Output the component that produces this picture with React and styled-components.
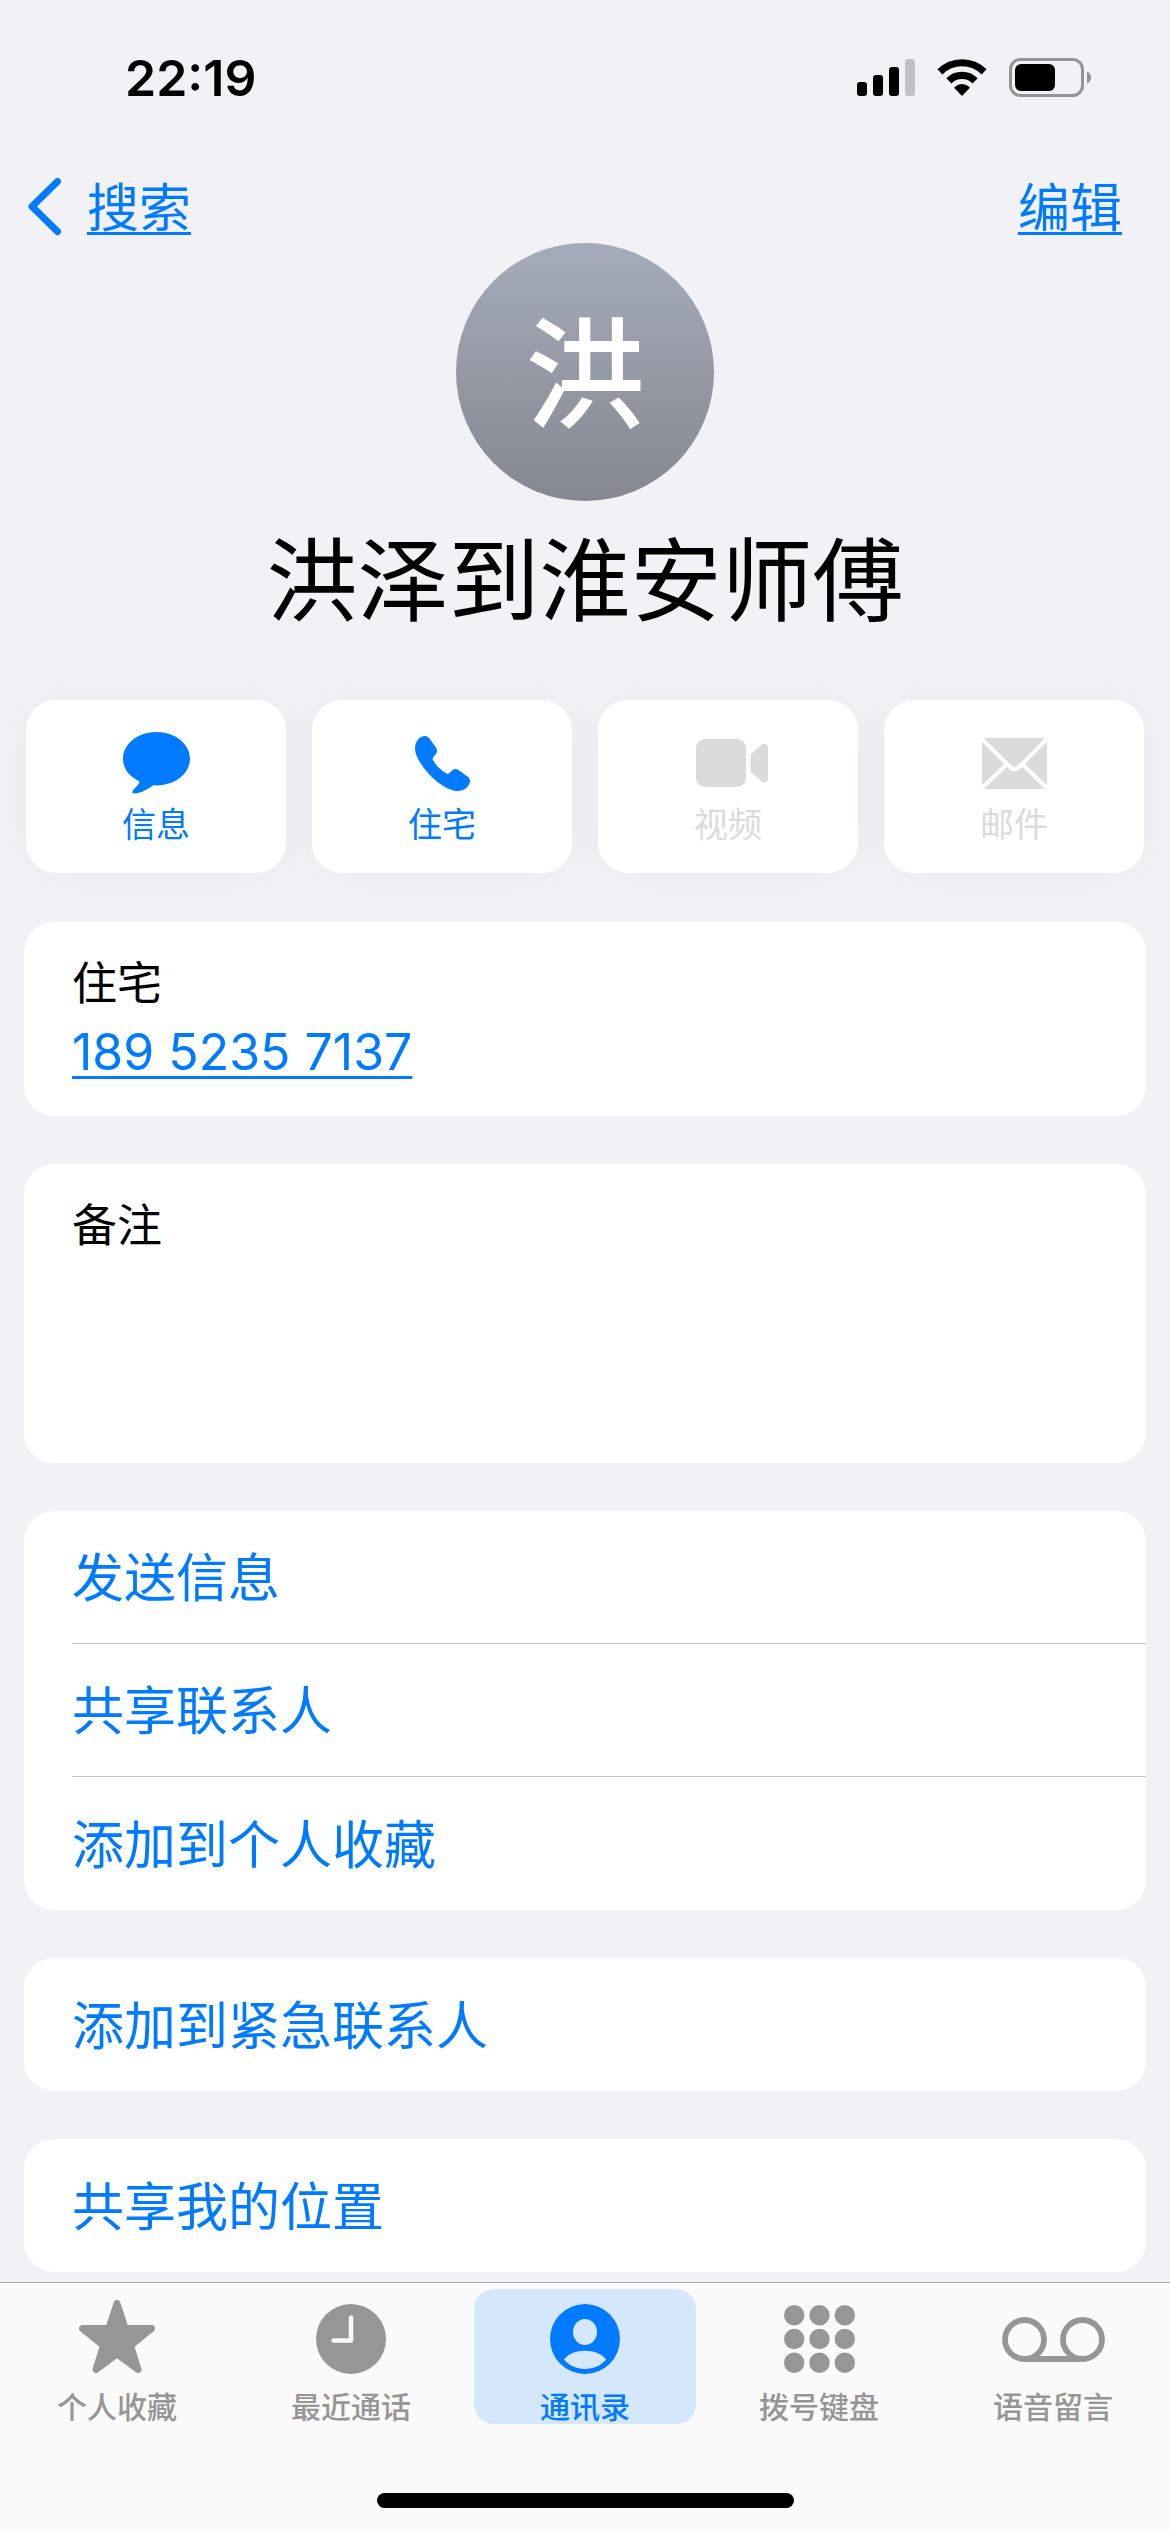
import React, { useState } from 'react';
import styled, { createGlobalStyle, ThemeProvider } from 'styled-components'

const theme = {
  colors: {
    page: '#f1f1f6',
    card: '#ffffff',
    bar: '#fafafa',
    blue: '#007aff',
    activeTab: '#d5e7fb',
    grey: '#979595',
    disabled: '#dbdbdb',
    line: '#c4c4c7',
    barLine: '#a9a9ad',
  },
  text: {
    xs: '30px',
    s: '34px',
    m: '45px',
    digits: '50px',
    l: '52px',
    xl: '91px',
  },
  radius: '30px',
}

const GlobalStyle = createGlobalStyle`
  * {
    box-sizing: border-box;
  }

  body {
    margin: 0;
    background-color: ${({ theme }) => theme.colors.page};
    font-family: Inter, "Noto Sans CJK SC", sans-serif;
    color: #000;
  }

  button, textarea {
    font: inherit;
    color: inherit;
    border: none;
    background: none;
    margin: 0;
    padding: 0;
  }

  button {
    cursor: pointer;
  }

  svg {
    display: block;
    flex-shrink: 0;
  }
`

const Screen = styled.div`
  display: flex;
  flex-direction: column;
  min-height: 100vh;
`

const StatusBar = styled.div`
  display: flex;
  align-items: center;
  justify-content: space-between;
  height: 141px;
  padding: 14px 78px 0 125px;
`

const Time = styled.time`
  font-size: ${({ theme }) => theme.text.digits};
  font-weight: 600;
  line-height: 60px;
`

const StatusIcons = styled.div`
  display: flex;
  align-items: center;
  gap: 22px;
`

const NavBar = styled.header`
  display: flex;
  align-items: center;
  justify-content: space-between;
  padding: 34px 48px 0 28px;
  font-size: ${({ theme }) => theme.text.l};
  line-height: 68px;
  color: ${({ theme }) => theme.colors.blue};
`

const BackLink = styled.a`
  display: flex;
  align-items: center;
  gap: 26px;
  color: inherit;
  text-decoration: none;
`

const Underlined = styled.span`
  text-decoration: underline;
  text-decoration-thickness: 3px;
  text-underline-offset: 5px;
  text-decoration-skip-ink: none;
`

const Profile = styled.section`
  display: flex;
  flex-direction: column;
  align-items: center;
  gap: 26px;
`

const Avatar = styled.div`
  display: flex;
  align-items: center;
  justify-content: center;
  width: 258px;
  height: 258px;
  padding-top: 8px;
  border-radius: 50%;
  background: linear-gradient(#a5abb9, #858891);
  color: #fff;
  font-size: 120px;
  font-weight: 500;
  line-height: 1;
`

const Name = styled.h1`
  margin: 0;
  font-size: ${({ theme }) => theme.text.xl};
  font-weight: 400;
  line-height: 108px;
`

const Actions = styled.div`
  display: grid;
  grid-template-columns: repeat(4, 1fr);
  gap: 26px;
  padding: 65px 26px 49px;
`

const ActionButton = styled.button`
  display: flex;
  flex-direction: column;
  align-items: center;
  gap: 10px;
  padding: 31px 0 28px;
  border-radius: ${({ theme }) => theme.radius};
  background-color: ${({ theme }) => theme.colors.card};
  box-shadow: 0 0 48px rgba(0, 0, 0, 0.04);
  font-size: ${({ theme }) => theme.text.s};
  line-height: 40px;
  color: ${({ theme }) => theme.colors.blue};

  &:disabled {
    color: ${({ theme }) => theme.colors.disabled};
    cursor: default;
  }
`

const ActionIcon = styled.span`
  display: flex;
  align-items: center;
  justify-content: center;
  height: 64px;
`

const Cards = styled.main`
  display: flex;
  flex: 1;
  flex-direction: column;
  gap: 48px;
  padding: 0 24px 10px;
`

const Card = styled.section`
  border-radius: ${({ theme }) => theme.radius};
  background-color: ${({ theme }) => theme.colors.card};
  overflow: hidden;
`

const FieldCard = styled(Card)`
  display: flex;
  flex-direction: column;
  align-items: flex-start;
  gap: 4px;
  padding: 32px 48px 30px;
`

const FieldLabel = styled.label`
  font-size: ${({ theme }) => theme.text.m};
  line-height: 60px;
`

const PhoneLink = styled.a`
  font-size: ${({ theme }) => theme.text.digits};
  line-height: 68px;
  color: ${({ theme }) => theme.colors.blue};
  text-decoration-thickness: 3px;
  text-underline-offset: 6px;
`

const NoteInput = styled.textarea`
  width: 100%;
  height: 173px;
  font-size: ${({ theme }) => theme.text.m};
  line-height: 60px;
  resize: none;
  outline: none;
`

const ListCard = styled(Card)`
  padding-left: 48px;
`

const ListButton = styled.button`
  display: block;
  width: 100%;
  height: 133px;
  padding-top: 4px;
  text-align: left;
  font-size: ${({ theme }) => theme.text.l};
  line-height: 72px;
  color: ${({ theme }) => theme.colors.blue};

  &:not(:last-child) {
    border-bottom: 1px solid ${({ theme }) => theme.colors.line};
  }
`

const BottomBar = styled.footer`
  position: sticky;
  bottom: 0;
  border-top: 1px solid ${({ theme }) => theme.colors.barLine};
  padding: 6px 0 24px;
  background-color: ${({ theme }) => theme.colors.bar};
`

const Tabs = styled.nav`
  display: grid;
  grid-template-columns: repeat(5, 1fr);
`

const Tab = styled.button`
  display: flex;
  flex-direction: column;
  align-items: center;
  gap: 14px;
  margin: 0 6px;
  padding-top: 13px;
  border-radius: 20px;
  font-size: ${({ theme }) => theme.text.xs};
  font-weight: 500;
  line-height: 34px;
  color: ${({ theme, $active }) => $active ? theme.colors.blue : theme.colors.grey};
  background-color: ${({ theme, $active }) => $active ? theme.colors.activeTab : 'transparent'};
`

const TabIcon = styled.span`
  display: flex;
  align-items: center;
  justify-content: center;
  height: 74px;
`

const HomeIndicator = styled.div`
  width: 417px;
  height: 15px;
  margin: 69px auto 0;
  border-radius: 8px;
  background-color: #000;
`

const SignalIcon = () => (
  <svg width="58" height="37" viewBox="0 0 58 37">
    <rect x="0" y="23" width="10" height="14" rx="3" />
    <rect x="16" y="16" width="10" height="21" rx="3" />
    <rect x="32" y="8" width="10" height="29" rx="3" />
    <rect x="48" y="0" width="10" height="37" rx="3" fill="#c1c1c5" />
  </svg>
)

const WifiIcon = () => (
  <svg width="50" height="37" viewBox="0 0 50 37">
    <g fill="none" stroke="#000" strokeWidth="7.2">
      <path d="M2.9 12.9a31.3 31.3 0 0 1 44.2 0" />
      <path d="M11.9 21.9a18.5 18.5 0 0 1 26.2 0" />
    </g>
    <path d="M25 37l-7.2-7.4c-.6-.6-.5-1.4.1-1.9a11 11 0 0 1 14.2 0c.6.5.7 1.3.1 1.9z" />
  </svg>
)

const BatteryIcon = () => (
  <svg width="83" height="39" viewBox="0 0 83 39">
    <rect x="1.5" y="1.5" width="72" height="36" rx="10" fill="none" stroke="#949498" strokeWidth="3" />
    <rect x="6" y="6" width="40" height="27" rx="6" />
    <path d="M78 13.5c2.6 1 4 3.3 4 6s-1.4 5-4 6z" fill="#949498" />
  </svg>
)

const BackIcon = () => (
  <svg width="33" height="62" viewBox="0 0 33 62" fill="none" stroke="currentColor"
       strokeWidth="7" strokeLinecap="round" strokeLinejoin="round">
    <path d="M29.5 3.5L4 28.5l25.500 25" />
  </svg>
)

const MessageIcon = () => (
  <svg width="67" height="62" viewBox="0 0 67 62" fill="currentColor">
    <path d="M33.5 0C52 0 67 11.9 67 26.7S52 53.4 33.5 53.4c-1.3 0-2.5 0-3.5-.1C25.500 57 18.500 61 11.500 61.6c-2.300.1-2.700-1.900-1.400-3.300 2.800-3 4.900-5.300 6.100-7.200.5-.9.3-1.7-.6-2.200C6 44.300 0 36.300 0 26.700 0 11.900 15 0 33.500 0z" />
  </svg>
)

const PhoneIcon = () => (
  <svg width="55" height="55" viewBox="0 0 55 55" fill="currentColor">
    <path d="M10 0C12 0 14 1.5 15.5 4L21.3 12C22.5 14 22.3 16 21 17.7L18 21.5C17.3 22.6 17.5 23.3 18 24C21 29.5 26 34.5 31.5 37.6C32.5 38.1 33.2 38 34 37.3L37.8 34C39.5 32.7 41.5 32.8 43.5 34.1L52.5 40.5C54.2 41.8 55 43.3 55 45C55 50 49.5 55 42.5 55C34 55 22 47 13.5 37.5C5 28 0 19 0 12.5C0 5.5 4.5 0 10 0Z" />
  </svg>
)

const VideoIcon = () => (
  <svg width="80" height="48" viewBox="-8 0 80 48" fill="currentColor">
    <rect width="50" height="48" rx="9" />
    <path d="M54.5 17.5c0-1.3.4-2.2 1.3-3L65.5 5.8c2.6-2.3 6.5-1 6.5 2.4v31.6c0 3.4-3.9 4.7-6.5 2.4L55.8 34c-.9-.8-1.3-1.7-1.3-3z" />
  </svg>
)

const MailIcon = () => (
  <svg width="65" height="51" viewBox="0 0 65 51">
    <rect width="65" height="51" rx="3" fill="currentColor" />
    <g fill="none" stroke="#fff" strokeWidth="4">
      <path d="M-1 0L28 29q4.5 4.5 9 0L66 0" />
      <path d="M-1 51L24 27M66 51L41 27" />
    </g>
  </svg>
)

const StarIcon = () => (
  <svg width="76" height="78" viewBox="0 0 76 78" fill="currentColor" stroke="currentColor"
       strokeWidth="7" strokeLinejoin="round">
    <path d="M38 3.5L46.2 28.5H72.5L51.5 45.5L59 69.5L38 54L17 69.5L24.5 45.5L3.5 28.5H29.8Z" />
  </svg>
)

const ClockIcon = () => (
  <svg width="70" height="70" viewBox="0 0 70 70">
    <circle cx="35" cy="35" r="35" fill="currentColor" />
    <path d="M35 13.5v23H17.5" fill="none" stroke="#fafafa" strokeWidth="4.5"
          strokeLinecap="round" strokeLinejoin="round" />
  </svg>
)

const PersonIcon = () => (
  <svg width="70" height="70" viewBox="0 0 70 70">
    <circle cx="35" cy="35" r="35" fill="currentColor" />
    <g fill="#d5e7fb">
      <ellipse cx="35" cy="28" rx="12" ry="13" />
      <path d="M14 55.5C18 50 26 46.7 35 46.7S52 50 56 55.5C51 61.5 43.5 65 35 65S19 61.5 14 55.5Z" />
    </g>
  </svg>
)

const KeypadIcon = () => (
  <svg width="71" height="68" viewBox="0 0 71 68" fill="currentColor">
    {[10.2, 34, 57.8].map((y) => (
      [10.2, 35.5, 60.8].map((x) => <circle key={`${x}-${y}`} cx={x} cy={y} r="10.2" />)
    ))}
  </svg>
)

const VoicemailIcon = () => (
  <svg width="103" height="45" viewBox="0 0 103 45" fill="none" stroke="currentColor" strokeWidth="5.8">
    <circle cx="22.5" cy="22.5" r="19.5" />
    <circle cx="80.5" cy="22.5" r="19.5" />
    <path d="M22.5 42h58" />
  </svg>
)

const actions = [
  { label: '信息', icon: <MessageIcon /> },
  { label: '住宅', icon: <PhoneIcon /> },
  { label: '视频', icon: <VideoIcon />, disabled: true },
  { label: '邮件', icon: <MailIcon />, disabled: true },
]

const lists = [
  ['发送信息', '共享联系人', '添加到个人收藏'],
  ['添加到紧急联系人'],
  ['共享我的位置'],
]

const tabs = [
  { label: '个人收藏', icon: <StarIcon /> },
  { label: '最近通话', icon: <ClockIcon /> },
  { label: '通讯录', icon: <PersonIcon /> },
  { label: '拨号键盘', icon: <KeypadIcon /> },
  { label: '语音留言', icon: <VoicemailIcon /> },
]

const App = () => {
  const [activeTab, setActiveTab] = useState('通讯录')
  const [note, setNote] = useState('')

  return (
    <ThemeProvider theme={theme}>
      <GlobalStyle />
      <Screen>
        <StatusBar>
          <Time>22:19</Time>
          <StatusIcons>
            <SignalIcon />
            <WifiIcon />
            <BatteryIcon />
          </StatusIcons>
        </StatusBar>
        <NavBar>
          <BackLink href="#search">
            <BackIcon />
            <Underlined>搜索</Underlined>
          </BackLink>
          <button type="button"><Underlined>编辑</Underlined></button>
        </NavBar>
        <Profile>
          <Avatar>洪</Avatar>
          <Name>洪泽到淮安师傅</Name>
        </Profile>
        <Actions>
          {actions.map(({ label, icon, disabled }) => (
            <ActionButton key={label} type="button" disabled={disabled}>
              <ActionIcon>{icon}</ActionIcon>
              {label}
            </ActionButton>
          ))}
        </Actions>
        <Cards>
          <FieldCard>
            <FieldLabel as="span">住宅</FieldLabel>
            <PhoneLink href="tel:18952357137">189 5235 7137</PhoneLink>
          </FieldCard>
          <FieldCard>
            <FieldLabel htmlFor="note">备注</FieldLabel>
            <NoteInput id="note" value={note} onChange={(event) => setNote(event.target.value)} />
          </FieldCard>
          {lists.map((items) => (
            <ListCard key={items[0]}>
              {items.map((item) => (
                <ListButton key={item} type="button">{item}</ListButton>
              ))}
            </ListCard>
          ))}
        </Cards>
        <BottomBar>
          <Tabs>
            {tabs.map(({ label, icon }) => (
              <Tab
                key={label}
                type="button"
                $active={label === activeTab}
                onClick={() => setActiveTab(label)}
              >
                <TabIcon>{icon}</TabIcon>
                {label}
              </Tab>
            ))}
          </Tabs>
          <HomeIndicator />
        </BottomBar>
      </Screen>
    </ThemeProvider>
  );
};

export default App
